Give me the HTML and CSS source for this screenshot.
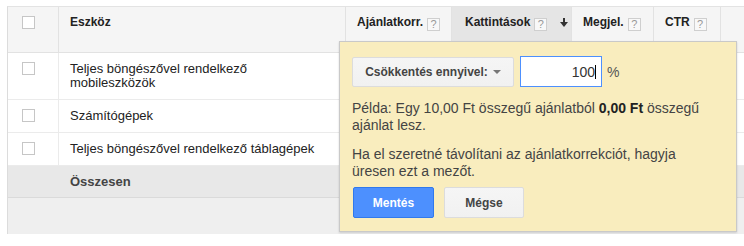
FILE: index.html
```html
<!DOCTYPE html>
<html lang="hu">

<head>
  <meta charset="UTF-8" />
  <meta name="viewport" content="width=device-width, initial-scale=1.0" />
  <title>Eszköz ajánlatkorrekció</title>
  <link rel="stylesheet" href="styles.css">
</head>

<body>
  <div class="report">
    <div class="row head">
      <div class="cell cb"><span class="check"></span></div>
      <div class="cell"><span>Eszköz</span></div>
      <div class="cell"><span>Ajánlatkorr.</span><span class="help">?</span></div>
      <div class="cell sorted">
        <span>Kattintások</span><span class="help">?</span>
        <svg class="sort" width="8" height="9" viewBox="0 0 8 9">
          <rect x="3" y="0" width="2" height="5" fill="#333" />
          <polygon points="0,4 8,4 4,9" fill="#333" />
        </svg>
      </div>
      <div class="cell"><span>Megjel.</span><span class="help">?</span></div>
      <div class="cell"><span>CTR</span><span class="help">?</span></div>
      <div class="cell"></div>
    </div>

    <div class="row item">
      <div class="cell cb"><span class="check"></span></div>
      <div class="cell name">Teljes böngészővel rendelkező<br>mobileszközök</div>
      <div class="cell"></div>
    </div>
    <div class="row item">
      <div class="cell cb"><span class="check"></span></div>
      <div class="cell name">Számítógépek</div>
      <div class="cell"></div>
    </div>
    <div class="row item">
      <div class="cell cb"><span class="check"></span></div>
      <div class="cell name">Teljes böngészővel rendelkező táblagépek</div>
      <div class="cell"></div>
    </div>

    <div class="row total">
      <div class="cell cb"></div>
      <div class="cell">Összesen</div>
      <div class="cell"></div>
    </div>
    <div class="foot"></div>

    <!-- bid adjustment editor -->
    <div class="popup">
      <div class="controls">
        <div class="dropdown">Csökkentés ennyivel: <span class="caret"></span></div>
        <div class="field">100<span class="cursor"></span></div>
        <span class="pct">%</span>
      </div>
      <p class="note">Példa: Egy 10,00 Ft összegű ajánlatból <b>0,00 Ft</b> összegű ajánlat lesz.</p>
      <p class="note second">Ha el szeretné távolítani az ajánlatkorrekciót, hagyja üresen ezt a mezőt.</p>
      <div class="actions">
        <button class="btn primary">Mentés</button>
        <button class="btn">Mégse</button>
      </div>
    </div>
  </div>
</body>

</html>
```

FILE: styles.css
```css
html,
body,
p {
  margin: 0;
  padding: 0;
}

body {
  font-family: "Liberation Sans", Arial, sans-serif;
  color: #222;
  background: #fff;
  overflow: hidden;
}

.report {
  position: relative;
  width: 760px;
  margin: 6px 0 0 7px;
  border-left: 1px solid #dcdcdc;
  border-top: 1px solid #e3e3e3;
}

.row {
  display: grid;
  grid-template-columns: 51px 287px 106px 120px 82px 67px 1fr;
}

.cell {
  box-sizing: border-box;
  padding-left: 11px;
}

.cell.cb {
  padding-left: 14px;
}

.check {
  display: block;
  box-sizing: border-box;
  width: 13px;
  height: 13px;
  border: 1px solid #c6c6c6;
  background: #fff;
}

/* header */
.head .cell {
  height: 46px;
  background: #f5f5f5;
  border-right: 1px solid #e2e2e2;
  border-bottom: 1px solid #e2e2e2;
  padding-top: 7px;
  display: flex;
  align-items: flex-start;
  gap: 4px;
  font-size: 12px;
  font-weight: bold;
  line-height: 16px;
  color: #222;
}

.head .cell:last-child {
  border-right: 0;
}

.head .cb {
  padding-top: 9px;
}

.head .sorted {
  background: #e5e5e5;
  padding-left: 13px;
}

.help {
  box-sizing: border-box;
  width: 13px;
  height: 13px;
  margin-top: 4px;
  border: 1px solid #cfcfcf;
  background: #f8f8f8;
  color: #999;
  font-size: 11px;
  font-weight: normal;
  line-height: 11px;
  text-align: center;
}

.sort {
  margin: 4px 0 0 9px;
}

/* body rows */
.item {
  grid-template-columns: 51px 1fr 40px;
}

.item .cell {
  padding-top: 9px;
  padding-bottom: 9px;
  border-bottom: 1px solid #ebebeb;
  font-size: 13px;
  line-height: 14px;
}

.item .cb {
  border-right: 1px solid #ebebeb;
}

.total {
  grid-template-columns: 51px 1fr 40px;
  background: #e8e8e8;
  border-bottom: 1px solid #dadada;
}

.total .cell {
  height: 31px;
  padding-top: 8px;
  font-size: 13px;
  font-weight: bold;
  line-height: 15px;
  color: #444;
}

.foot {
  height: 36px;
  background: #efefef;
}

/* popup */
.popup {
  position: absolute;
  left: 331px;
  top: 34px;
  box-sizing: border-box;
  width: 398px;
  padding: 14px 26px 13px 12px;
  background: #f9edbe;
  border: 1px solid #c9c9c9;
  box-shadow: 0 1px 2px rgba(0, 0, 0, 0.15);
  color: #444;
}

.controls {
  display: flex;
  align-items: center;
  height: 31px;
}

.dropdown {
  box-sizing: border-box;
  width: 162px;
  height: 30px;
  display: flex;
  align-items: center;
  justify-content: center;
  gap: 5px;
  background: linear-gradient(#f5f5f5, #f1f1f1);
  border: 1px solid #dcdcdc;
  border-radius: 2px;
  font-size: 12px;
  font-weight: bold;
  color: #444;
}

.caret {
  width: 0;
  height: 0;
  border-left: 4px solid transparent;
  border-right: 4px solid transparent;
  border-top: 4px solid #777;
}

.field {
  box-sizing: border-box;
  width: 82px;
  height: 31px;
  margin-left: 6px;
  padding-right: 5px;
  display: flex;
  align-items: center;
  justify-content: flex-end;
  background: #fff;
  border: 1px solid #4d90fe;
  font-size: 14px;
  color: #333;
}

.cursor {
  width: 1px;
  height: 14px;
  background: #000;
}

.pct {
  margin-left: 5px;
  font-size: 14px;
  color: #555;
}

.note {
  margin-top: 13px;
  font-size: 14px;
  line-height: 17px;
}

.note b {
  color: #222;
}

.note.second {
  margin-top: 12px;
}

.actions {
  display: flex;
  gap: 10px;
  margin-top: 7px;
}

.btn {
  box-sizing: border-box;
  height: 31px;
  width: 80px;
  margin: 0;
  padding: 0;
  border: 1px solid #dcdcdc;
  border-radius: 2px;
  background: linear-gradient(#f5f5f5, #f1f1f1);
  font-family: "Liberation Sans", Arial, sans-serif;
  font-size: 12px;
  font-weight: bold;
  color: #444;
}

.btn.primary {
  width: 81px;
  margin-left: 1px;
  background: #4d90fe;
  border-color: #3079ed;
  color: #fff;
}
```
